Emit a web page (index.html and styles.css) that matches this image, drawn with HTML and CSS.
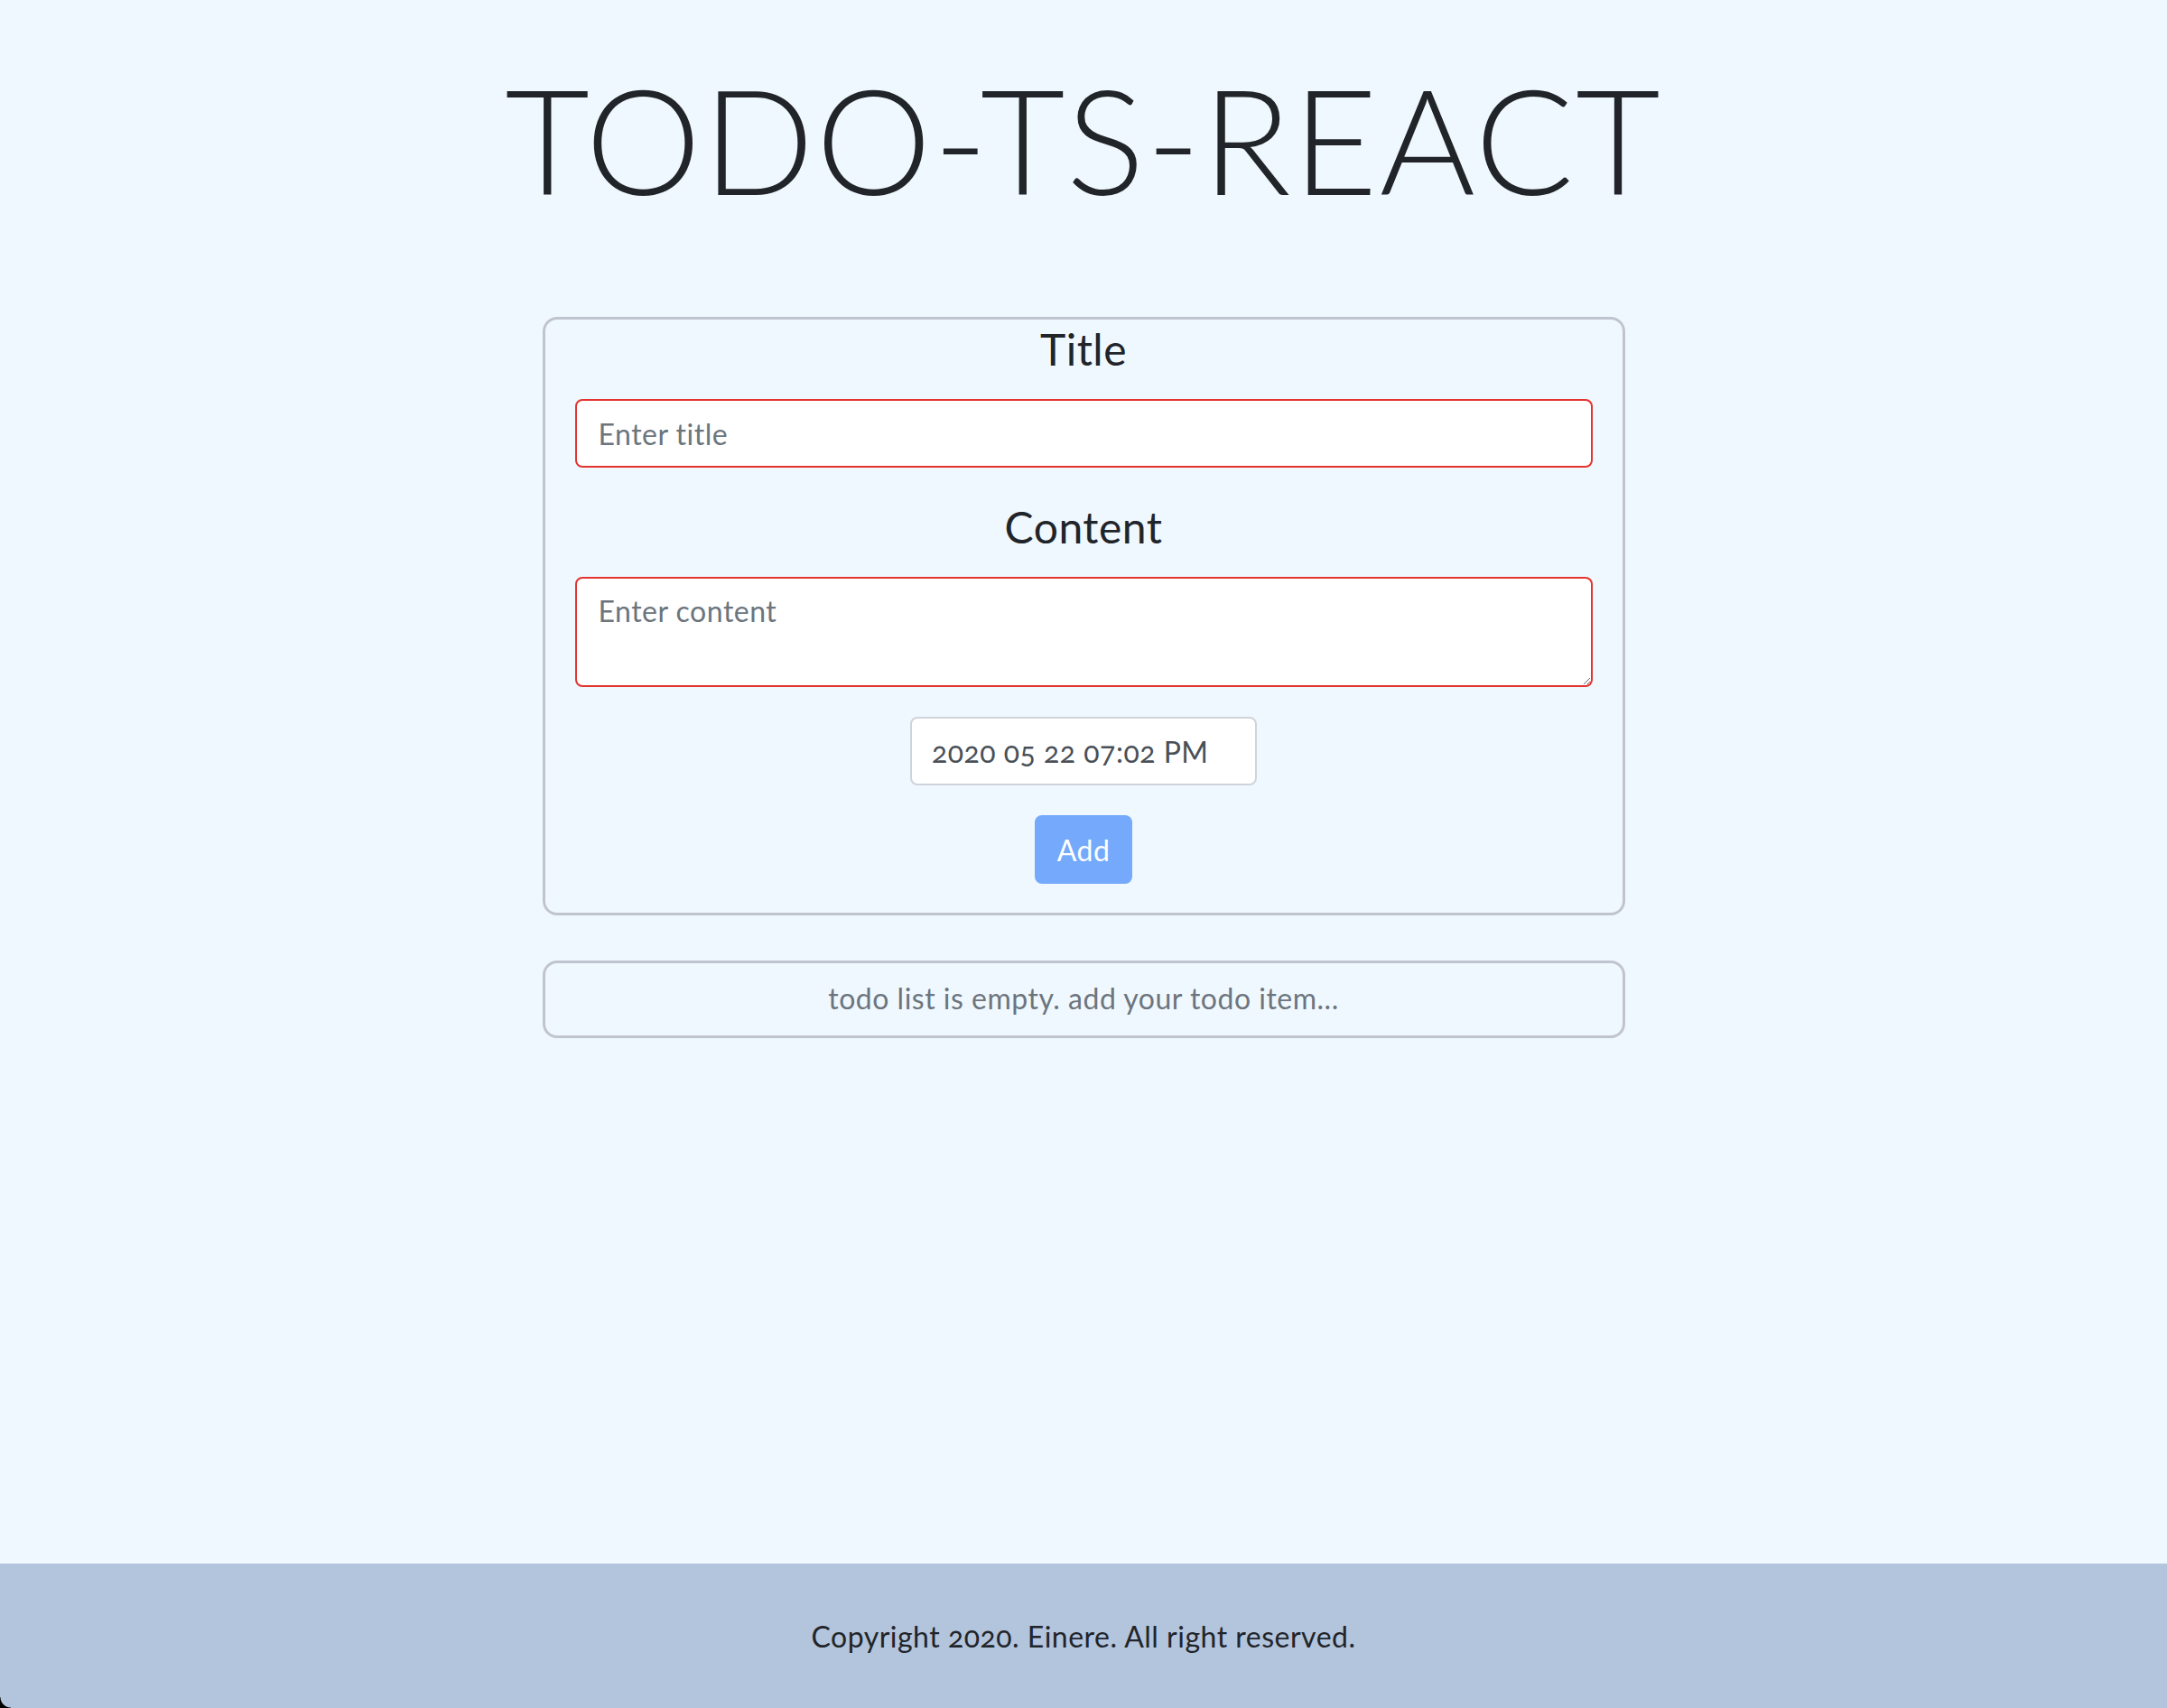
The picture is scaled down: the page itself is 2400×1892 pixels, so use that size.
FILE: index.html
```html
<!DOCTYPE html>
<html lang="en">
<head>
<meta charset="utf-8">
<title>TODO-TS-REACT</title>
<link rel="stylesheet" href="styles.css">
</head>
<body>
<main class="main">
  <h1 class="app-title">TODO-TS-REACT</h1>
  <form class="card todo-form">
    <label class="field-label" for="title">Title</label>
    <input class="field field-invalid" id="title" type="text" placeholder="Enter title">
    <label class="field-label field-label-gap" for="content">Content</label>
    <textarea class="field field-invalid field-area" id="content" placeholder="Enter content"></textarea>
    <input class="date-field" type="text" value="2020 05 22 07:02 PM" readonly>
    <button class="add-btn" type="button" disabled>Add</button>
  </form>
  <div class="card empty-card">todo list is empty. add your todo item...</div>
</main>
<footer class="footer">Copyright 2020. Einere. All right reserved.</footer>
</body>
</html>
```
FILE: styles.css
```css
* { box-sizing: border-box; }
html, body { margin: 0; padding: 0; }
body {
  background: #f0f8ff;
  color: #212529;
  font-family: Lato, "Open Sans", sans-serif;
  font-size: 32px;
  letter-spacing: 0.5px;
  min-height: 100vh;
  display: flex;
  flex-direction: column;
}
.main {
  flex: 1;
  display: flex;
  flex-direction: column;
  align-items: center;
}
.app-title {
  margin: 58px 0 0;
  font-size: 162px;
  font-weight: 300;
  line-height: 192px;
  letter-spacing: 2px;
  color: #212529;
}
.card {
  width: 1199px;
  border: 3px solid #c0c4cf;
  border-radius: 16px;
}
.todo-form {
  margin-top: 101px;
  padding: 4px 33px 32px;
  display: flex;
  flex-direction: column;
  align-items: center;
}
.field-label {
  font-size: 48px;
  line-height: 58px;
  font-weight: 400;
  margin-bottom: 26px;
}
.field-label-gap { margin-top: 37px; }
.field {
  width: 100%;
  height: 76px;
  border: 2px solid #e3342f;
  border-radius: 8px;
  background: #fff;
  padding: 12px 24px;
  font-family: inherit;
  font-size: 32px;
  letter-spacing: 0.5px;
  line-height: 48px;
  color: #495057;
}
.field::placeholder { color: #6c757d; opacity: 1; }
.field-area {
  height: 122px;
  display: block;
  resize: vertical;
}
.date-field {
  margin-top: 33px;
  width: 384px;
  height: 76px;
  border: 2px solid #ced4da;
  border-radius: 8px;
  background: #fff;
  padding: 12px 22px;
  font-family: inherit;
  font-size: 32px;
  letter-spacing: 0.5px;
  color: #495057;
  font-variant-numeric: oldstyle-nums;
}
.add-btn {
  margin-top: 33px;
  height: 76px;
  padding: 0 25px;
  border: 0;
  border-radius: 8px;
  background: #74a9fb;
  color: #fff;
  font-family: inherit;
  font-size: 32px;
  letter-spacing: 0.5px;
}
.empty-card {
  margin-top: 50px;
  height: 86px;
  display: flex;
  align-items: center;
  justify-content: center;
  color: #6c757d;
  font-size: 32px;
  padding-bottom: 3px;
}
.footer {
  position: relative;
  height: 160px;
  background: #b3c4dd;
  color: #212529;
  display: flex;
  align-items: center;
  justify-content: center;
  font-size: 32px;
  font-variant-numeric: oldstyle-nums;
}
.footer::before {
  content: "";
  position: absolute;
  left: 0;
  bottom: 0;
  width: 12px;
  height: 12px;
  background: radial-gradient(circle at 100% 0, transparent 11px, #000 12px);
}
```
